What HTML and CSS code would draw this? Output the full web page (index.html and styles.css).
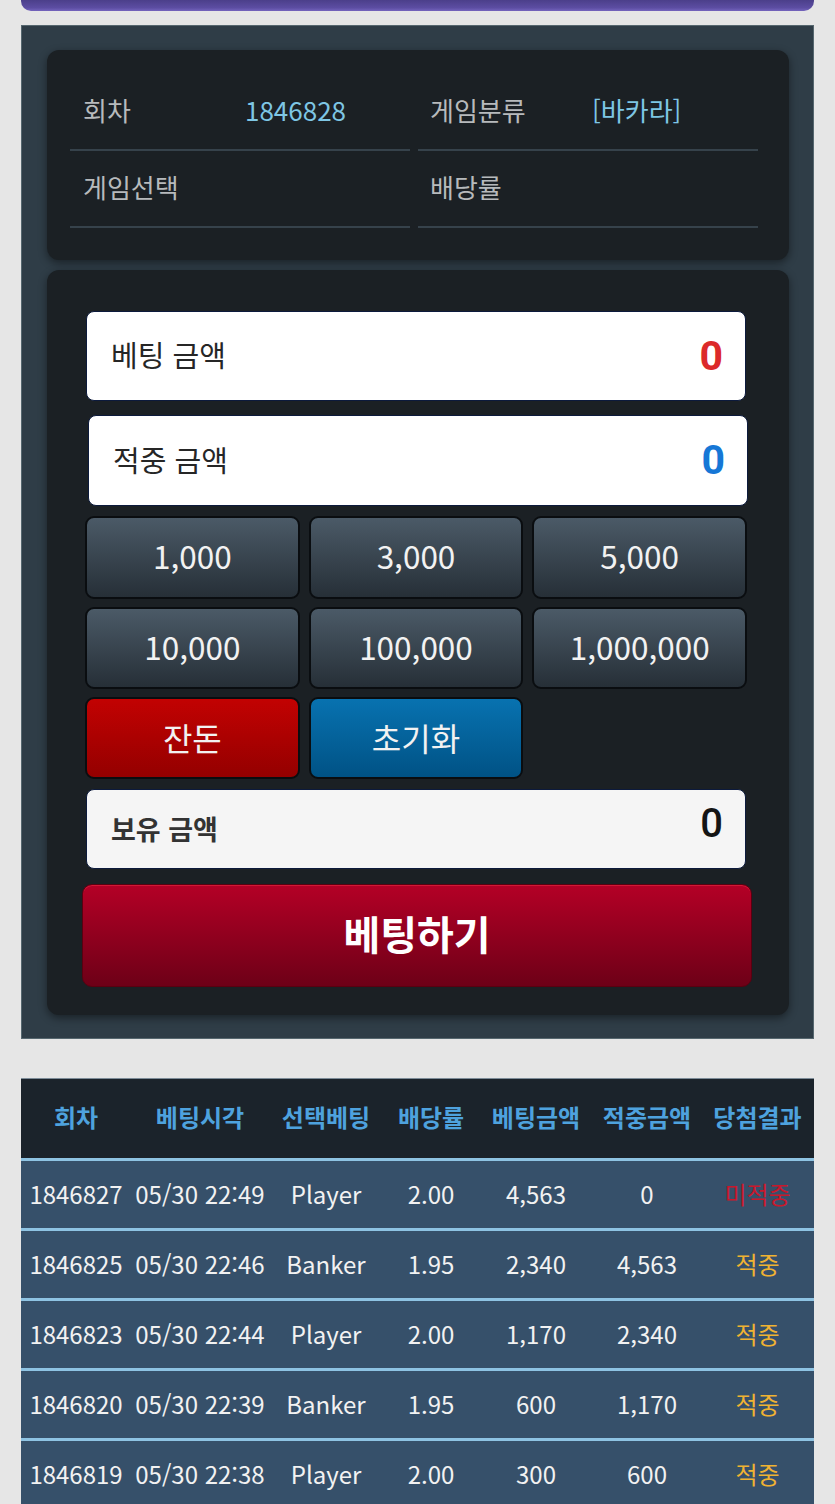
FILE: index.html
```html
<!DOCTYPE html>
<html lang="ko">
<head>
<meta charset="utf-8">
<title>베팅</title>
<link rel="stylesheet" href="styles.css">
</head>
<body>
<div class="page">
  <div class="topbar"></div>
  <section class="panel">
    <div class="card info">
      <div class="info-grid">
        <div class="cell"><span class="lbl">회차</span><span class="val">1846828</span></div>
        <div class="cell"><span class="lbl">게임분류</span><span class="val">[바카라]</span></div>
        <div class="cell"><span class="lbl">게임선택</span></div>
        <div class="cell"><span class="lbl">배당률</span></div>
      </div>
    </div>
    <div class="card bet">
      <div class="amount"><span class="amount-lbl">베팅 금액</span><span class="amount-val red">0</span></div>
      <div class="amount shift"><span class="amount-lbl">적중 금액</span><span class="amount-val blue">0</span></div>
      <div class="chips">
        <button class="chip">1,000</button>
        <button class="chip">3,000</button>
        <button class="chip">5,000</button>
        <button class="chip">10,000</button>
        <button class="chip">100,000</button>
        <button class="chip">1,000,000</button>
        <button class="chip chip-red">잔돈</button>
        <button class="chip chip-blue">초기화</button>
      </div>
      <div class="amount hold"><span class="amount-lbl">보유 금액</span><span class="amount-val dark">0</span></div>
      <button class="submit">베팅하기</button>
    </div>
  </section>
  <table class="history">
    <colgroup>
      <col class="c1"><col class="c2"><col class="c3"><col class="c4"><col class="c5"><col class="c6"><col class="c7">
    </colgroup>
    <thead>
      <tr><th>회차</th><th>베팅시각</th><th>선택베팅</th><th>배당률</th><th>베팅금액</th><th>적중금액</th><th>당첨결과</th></tr>
    </thead>
    <tbody>
      <tr><td>1846827</td><td>05/30 22:49</td><td>Player</td><td>2.00</td><td>4,563</td><td>0</td><td class="lose">미적중</td></tr>
      <tr><td>1846825</td><td>05/30 22:46</td><td>Banker</td><td>1.95</td><td>2,340</td><td>4,563</td><td class="win">적중</td></tr>
      <tr><td>1846823</td><td>05/30 22:44</td><td>Player</td><td>2.00</td><td>1,170</td><td>2,340</td><td class="win">적중</td></tr>
      <tr><td>1846820</td><td>05/30 22:39</td><td>Banker</td><td>1.95</td><td>600</td><td>1,170</td><td class="win">적중</td></tr>
      <tr><td>1846819</td><td>05/30 22:38</td><td>Player</td><td>2.00</td><td>300</td><td>600</td><td class="win">적중</td></tr>
    </tbody>
  </table>
</div>
</body>
</html>
```
FILE: styles.css
```css
* { box-sizing: border-box; }
html, body { margin: 0; padding: 0; }
body {
  background: #e6e6e6;
  font-family: "Noto Sans CJK KR", "Noto Sans", sans-serif;
  color: #222;
}
.page {
  padding: 0 21px;
}
.topbar {
  height: 11px;
  border-radius: 0 0 10px 10px;
  background: linear-gradient(#4b3f8a, #5c4da2 70%, #7464bd);
}
.panel {
  margin-top: 14px;
  background: #2f3d47;
  border: 1px solid #56676f;
  padding: 24px 24px 23px 25px;
}
.card {
  background: #1b2024;
  border-radius: 12px;
  box-shadow: 0 3px 8px rgba(0, 0, 0, 0.45);
}
.info {
  padding: 24px 31px 32px 23px;
}
.info-grid {
  display: grid;
  grid-template-columns: 1fr 1fr;
  column-gap: 8px;
}
.cell {
  height: 77px;
  display: flex;
  align-items: center;
  padding-left: 13px;
  padding-bottom: 5px;
  border-bottom: 2px solid #36424b;
  font-size: 26px;
}
.cell:nth-child(2n) { padding-left: 12px; }
.lbl {
  width: 162px;
  color: #b7babc;
}
.val {
  color: #7ec6e4;
}
.bet {
  margin-top: 10px;
  padding: 41px 43px 28px 39px;
  display: flex;
  flex-direction: column;
}
.amount {
  height: 90px;
  background: #ffffff;
  border: 1px solid #0c1a3c;
  border-radius: 8px;
  display: flex;
  align-items: center;
  justify-content: space-between;
  padding: 0 22px 0 24px;
}
.amount.shift {
  height: 91px;
  margin: 14px -2px 0 2px;
}
.amount-lbl {
  font-size: 29px;
  color: #262626;
  padding-bottom: 4px;
}
.amount-val {
  font-family: "Roboto", "Noto Sans", sans-serif;
  font-size: 41px;
  font-weight: 700;
  line-height: 1;
}
.red { color: #dc2a2a; }
.blue { color: #1677d6; }
.chips {
  margin: 10px -1px 0 -1px;
  display: grid;
  grid-template-columns: repeat(3, 1fr);
  grid-template-rows: 83px 82px 82px;
  gap: 8px 9px;
}
.chip {
  font-family: "Noto Sans CJK KR", "Noto Sans", sans-serif;
  font-size: 31.5px;
  color: #f2f2f2;
  border: 2px solid #0a0d10;
  border-radius: 9px;
  background: linear-gradient(#4b5a67, #262f37);
  padding: 0 0 3px 0;
  line-height: 1;
}
.chip-red {
  background: linear-gradient(#c20202, #940000);
  font-size: 32px;
}
.chip-blue {
  background: linear-gradient(#0872b0, #005285);
  font-size: 32px;
}
.hold {
  height: 80px;
  margin-top: 10px;
  background: #f5f5f5;
  align-items: stretch;
}
.hold .amount-lbl {
  font-size: 27px;
  font-weight: 700;
  color: #333;
  align-self: center;
  padding: 0 0 2px 0;
}
.hold .amount-val {
  font-weight: 500;
  color: #151515;
  font-size: 40px;
  padding-top: 14px;
}
.submit {
  margin: 15px -6px 0 -4px;
  height: 103px;
  border-radius: 10px;
  border: 1px solid #5a0010;
  background: linear-gradient(#b40026, #6d0017);
  color: #ffffff;
  font-family: "Noto Sans CJK KR", sans-serif;
  font-size: 40px;
  font-weight: 700;
  padding: 0 0 6px 0;
  box-shadow: inset 0 1px 0 rgba(255, 60, 80, 0.4);
}
.history {
  margin-top: 39px;
  width: 100%;
  border-collapse: collapse;
  table-layout: fixed;
  border-top: 1px solid #7d8c98;
}
.c1 { width: 110px; }
.c2 { width: 138px; }
.c3 { width: 114px; }
.c4 { width: 96px; }
.c5 { width: 114px; }
.c6 { width: 108px; }
.c7 { width: 113px; }
.history th {
  height: 81px;
  background: #1b232b;
  color: #4ea2de;
  font-size: 24px;
  font-weight: 700;
  border-bottom: 3px solid #8ec3e3;
  padding: 0 0 5px 0;
  white-space: nowrap;
}
.history td {
  height: 70px;
  background: #36506a;
  color: #f2f2f2;
  font-size: 24px;
  text-align: center;
  border-bottom: 3px solid #8ec3e3;
  padding: 0 0 2px 0;
  white-space: nowrap;
}
.history td.lose { color: #c8182c; font-size: 24px; }
.history td.win { color: #f0b232; font-size: 24px; }
```
